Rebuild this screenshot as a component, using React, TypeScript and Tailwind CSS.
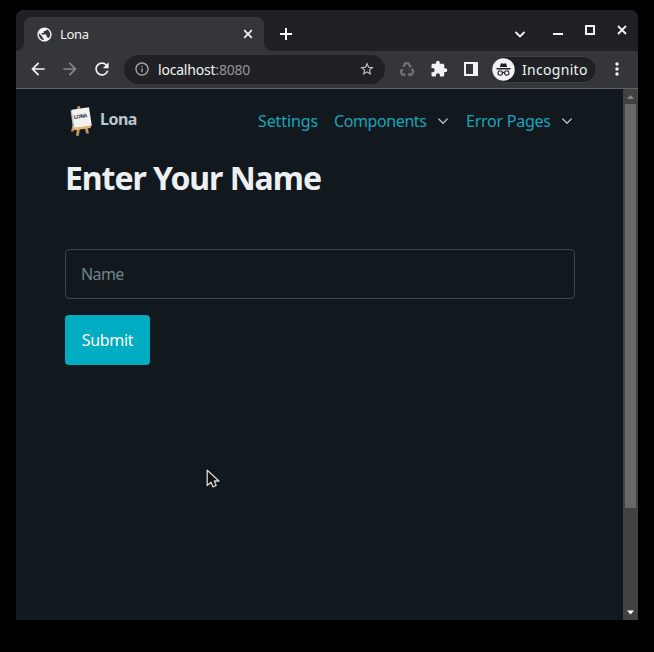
import React from "react";
import { MdPublic, MdArrowBack, MdArrowForward, MdRefresh, MdInfoOutline, MdStarBorder, MdExtension, MdMoreVert } from "react-icons/md";

function Easel() {
  return (
    <svg className="ml-1 h-8 w-6" viewBox="0 0 24 32">
      <path d="M8 1.6 11 1.2 11.3 4H8.3zM8 23 7 30.8H9.8L11 23zM15.5 22 17.2 28.6H20L18.5 22zM3.5 20.5 2 26.5H4.5L6 21z" fill="#c99554" />
      <path d="M1.6 5.6 3.2 5 6 23 4 23.5z" fill="#b9b9b9" />
      <path d="M2.6 4.8 20 2.2 22.8 20.8 5.6 23.2z" fill="#f2f2f0" />
      <path d="M5 22.8 21.6 20.6 21.8 23 5.2 25.2z" fill="#e3b474" />
      <text x="5" y="13.8" transform="rotate(-7 5 13)" fontSize="5.2" fontWeight="700" textLength="13.5" fontFamily="Liberation Sans, sans-serif" fill="#222">LONA</text>
    </svg>
  );
}

function Chevron() {
  return (
    <svg className="h-3 w-3 shrink-0" viewBox="0 0 12 12" fill="none" stroke="#b4c0c7" strokeWidth="1.3" strokeLinecap="round" strokeLinejoin="round">
      <path d="M1.8 4 6 8.2 10.2 4" />
    </svg>
  );
}

function Recycle() {
  return (
    <svg className="h-5 w-5" viewBox="0 0 20 20" fill="none" stroke="#717376" strokeWidth="2.2">
      <path d="M6.3 7.6 8.2 4.3H11.4L13.1 7.2M14.7 9.8 16.3 12.6 14.6 15.6H11.8M8.6 15.6H5.2L3.8 12.8 5.1 10.4" />
      <path d="M14.8 5.8 14 8.8 11 8M12.8 13.2 10.7 15.6 12.8 18M3 10.6 5.7 9.9 6.6 12.6" fill="#717376" stroke="none" />
    </svg>
  );
}

function TabStrip() {
  return (
    <div className="flex h-[41px] shrink-0 bg-[#202124] pt-[7px]">
      <div className="flex w-2 items-end bg-[#35363a]">
        <div className="-mt-[7px] h-[41px] w-2 rounded-br-lg bg-[#202124]" />
      </div>
      <div className="w-60 bg-[#202124]">
        <div className="flex h-[34px] items-center rounded-t-lg bg-[#35363a] pr-[11px] pl-3">
          <MdPublic className="h-[17px] w-[17px] text-[#f1f3f4]" />
          <span className="mt-px ml-[7px] text-[13px] tracking-[-0.3px] text-[#f1f3f4]">Lona</span>
          <svg className="ml-auto h-[10px] w-[10px]" viewBox="0 0 10 10" stroke="#f1f3f4" strokeWidth="1.7"><path d="M1.2 1.2 8.8 8.8M8.8 1.2 1.2 8.8" /></svg>
        </div>
      </div>
      <div className="flex h-[34px] flex-1 bg-[#35363a]">
        <div className="-mt-[7px] flex h-[41px] flex-1 rounded-bl-lg bg-[#202124] pt-[7px]">
          <svg className="mt-[11px] ml-4 h-3 w-3" viewBox="0 0 12 12" stroke="#fff" strokeWidth="2"><path d="M6 0V12M0 6H12" /></svg>
          <div className="ml-auto flex pr-[11px]">
            <svg className="mt-3 h-3 w-3" viewBox="0 0 12 12" fill="none" stroke="#f1f3f4" strokeWidth="1.8"><path d="M1.5 3 6 7.5 10.5 3" /></svg>
            <svg className="mt-2 ml-[27px] h-[10px] w-[10px]" viewBox="0 0 10 10"><path d="M0 8H10V10H0Z" fill="#f1f3f4" /></svg>
            <svg className="mt-2 ml-[22px] h-[10px] w-[10px]" viewBox="0 0 10 10"><path d="M1 1H9V9H1Z" fill="none" stroke="#f1f3f4" strokeWidth="2" /></svg>
            <svg className="mt-2 ml-[22px] h-[10px] w-[10px]" viewBox="0 0 10 10" stroke="#f1f3f4" strokeWidth="1.8"><path d="M1 1 9 9M9 1 1 9" /></svg>
          </div>
        </div>
      </div>
    </div>
  );
}

function Toolbar() {
  return (
    <div className="flex h-[38px] shrink-0 items-center border-b border-[#5f6367] bg-[#35363a] pb-px pl-3 text-[#f1f3f4]">
      <div className="flex gap-3">
        <MdArrowBack className="h-5 w-5" />
        <MdArrowForward className="h-5 w-5 text-[#85878a]" />
        <MdRefresh className="h-5 w-5" />
      </div>
      <div className="ml-3 flex h-[29px] w-[261px] items-center rounded-full bg-[#202124] pr-[10px] pl-[10px]">
        <MdInfoOutline className="h-4 w-4 text-[#a5a8ac]" />
        <span className="ml-2 text-[14px] tracking-[-0.2px]">localhost<span className="text-[#92959a]">:8080</span></span>
        <MdStarBorder className="ml-auto h-4 w-4 text-[#c5c7ca]" />
      </div>
      <div className="ml-3 flex items-center gap-3">
        <Recycle />
        <MdExtension className="h-[18px] w-5" />
        <svg className="h-5 w-5" viewBox="0 0 20 20"><path fillRule="evenodd" d="M3 3H17V17H3ZM5 5V15H12V5Z" fill="#f1f3f4" /></svg>
      </div>
      <div className="ml-[10px] flex h-[27px] w-[106px] items-center rounded-full border border-[#3f4346] bg-[#202124]">
        <svg className="h-[23px] w-[23px] shrink-0" viewBox="0 0 23 23">
          <circle cx="11.5" cy="11.5" r="11.2" fill="#f1f3f4" />
          <path d="M7.8 9 9 5.2 11.5 5.8 14 5.2 15.2 9z" fill="#202124" />
          <path d="M4.5 10.8H18.5" stroke="#202124" strokeWidth="1.4" />
          <g fill="none" stroke="#202124" strokeWidth="1.1"><circle cx="8.2" cy="15" r="2.2" /><circle cx="14.8" cy="15" r="2.2" /><path d="M10.4 14.7Q11.5 14 12.6 14.7" /></g>
        </svg>
        <span className="ml-[7px] text-[14px] tracking-[0.3px]">Incognito</span>
      </div>
      <MdMoreVert className="ml-[10px] h-5 w-5" />
    </div>
  );
}

export default function App() {
  return (
    <div className="h-[652px] w-[654px] bg-black pt-[10px] pl-4 font-['Noto_Sans',sans-serif]">
      <div className="flex h-[610px] w-[622px] flex-col overflow-hidden rounded-t-lg">
        <TabStrip />
        <Toolbar />
        <div className="flex min-h-0 flex-1 bg-[#11191e]">
          <main className="w-[607px] pr-12 pl-[49px]">
            <nav className="flex h-16 items-center">
              <Easel />
              <span className="ml-[7px] -mt-1 text-[16px] font-bold tracking-[-0.5px] text-[#bbc6ce]">Lona</span>
              <div className="ml-auto flex items-center text-[16px] whitespace-nowrap text-[#1ba3b9]">
                <span className="w-[76px] tracking-[-0.1px]">Settings</span>
                <span className="w-[103px] tracking-[-0.4px]">Components</span>
                <Chevron />
                <span className="ml-[17px] w-[95px] tracking-[-0.25px]">Error Pages</span>
                <Chevron />
                <span className="w-[2px]" />
              </div>
            </nav>
            <h1 className="mt-1 text-[32px] leading-[42px] font-bold tracking-[-1.05px] whitespace-nowrap text-[#edf0f3]">Enter Your Name</h1>
            <form className="mt-[50px]">
              <input placeholder="Name" className="block h-[50px] w-full rounded border border-[#374956] bg-transparent px-[15px] text-[16px] tracking-[-0.6px] placeholder:text-[#73828c]" />
              <button type="button" className="mt-4 h-[50px] w-[85px] rounded bg-[#00acc1] text-[16px] tracking-[-0.3px] text-white">Submit</button>
            </form>
          </main>
          <div className="flex w-[15px] flex-col items-center bg-[#424242]">
            <svg className="h-[15px] w-[15px] shrink-0" viewBox="0 0 15 15"><path d="M4 10 7.5 6 11 10z" fill="#878787" /></svg>
            <div className="h-[404px] w-[11px] bg-[#686868]" />
            <svg className="mt-auto h-[15px] w-[15px] shrink-0" viewBox="0 0 15 15"><path d="M4 5.5H11L7.5 9.5z" fill="#fff" /></svg>
          </div>
        </div>
      </div>
      <svg className="pointer-events-none absolute top-[469px] left-[206px] h-5 w-4" viewBox="0 0 16 20">
        <path d="M1.2 1.2V16.5L5 13.2 7 17.8 10.2 16.4 8.3 12H13z" fill="#111" stroke="#d8d8d8" strokeWidth="1.3" strokeLinejoin="round" />
      </svg>
    </div>
  );
}
